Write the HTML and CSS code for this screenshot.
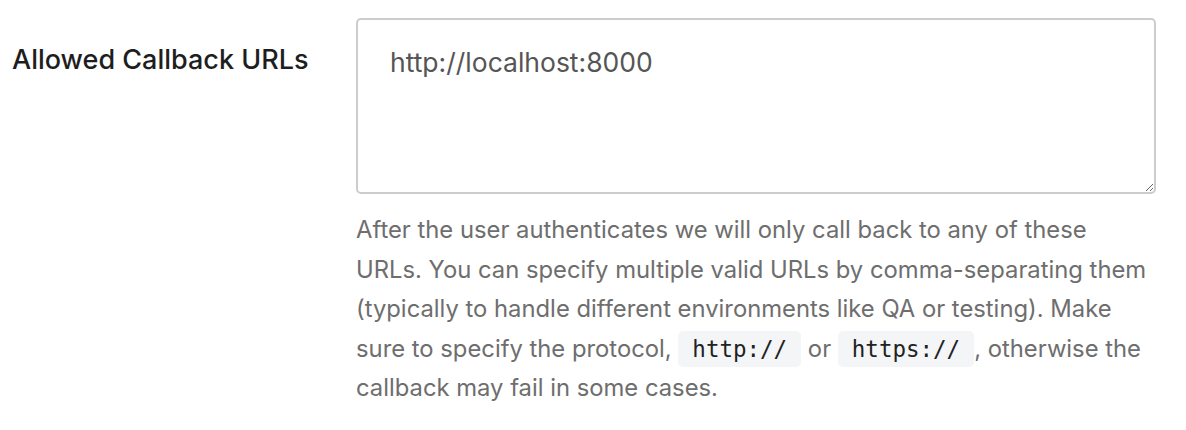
FILE: index.html
```html
<!DOCTYPE html>
<html>
<head>
<meta charset="utf-8">
<link rel="stylesheet" href="styles.css">
</head>
<body>
<div class="field">
  <label class="field-label" for="cb">Allowed Callback URLs</label>
  <div class="field-control">
    <textarea id="cb" class="field-input">http://localhost:8000</textarea>
    <p class="field-help">After the user authenticates we will only call back to any of these URLs. You can specify multiple valid URLs by comma-separating them (typically to handle different environments like QA or testing). Make sure to specify the protocol, <code>http://</code> or <code>https://</code>, otherwise the callback may fail in some cases.</p>
  </div>
</div>
</body>
</html>
```
FILE: styles.css
```css
html, body {
  margin: 0;
  padding: 0;
  background: #fff;
}
body {
  font-family: Inter, "Noto Sans", sans-serif;
}
.field {
  display: grid;
  grid-template-columns: 344px 800px;
  padding: 18px 0 0 12px;
}
.field-label {
  font-size: 27px;
  font-weight: 500;
  color: #1e1e1e;
  padding-top: 26px;
  line-height: 32px;
}
.field-control {
  display: flex;
  flex-direction: column;
}
.field-input {
  box-sizing: border-box;
  width: 800px;
  height: 176px;
  border: 2px solid #cccccc;
  border-radius: 5px;
  padding: 26px 32px;
  font-family: Inter, "Noto Sans", sans-serif;
  font-size: 26.5px;
  line-height: 32px;
  color: #555;
  resize: vertical;
  outline: none;
  margin: 0;
}
.field-help {
  margin: 16px 0 0 0;
  font-size: 23.8px;
  line-height: 39.6px;
  color: #6e6e6e;
  width: 800px;
}
.field-help code {
  display: inline-block;
  font-family: "DejaVu Sans Mono", monospace;
  font-size: 22.5px;
  line-height: 36px;
  color: #222;
  background: #f4f5f7;
  border-radius: 5px;
  padding: 0 14px;
}
```
